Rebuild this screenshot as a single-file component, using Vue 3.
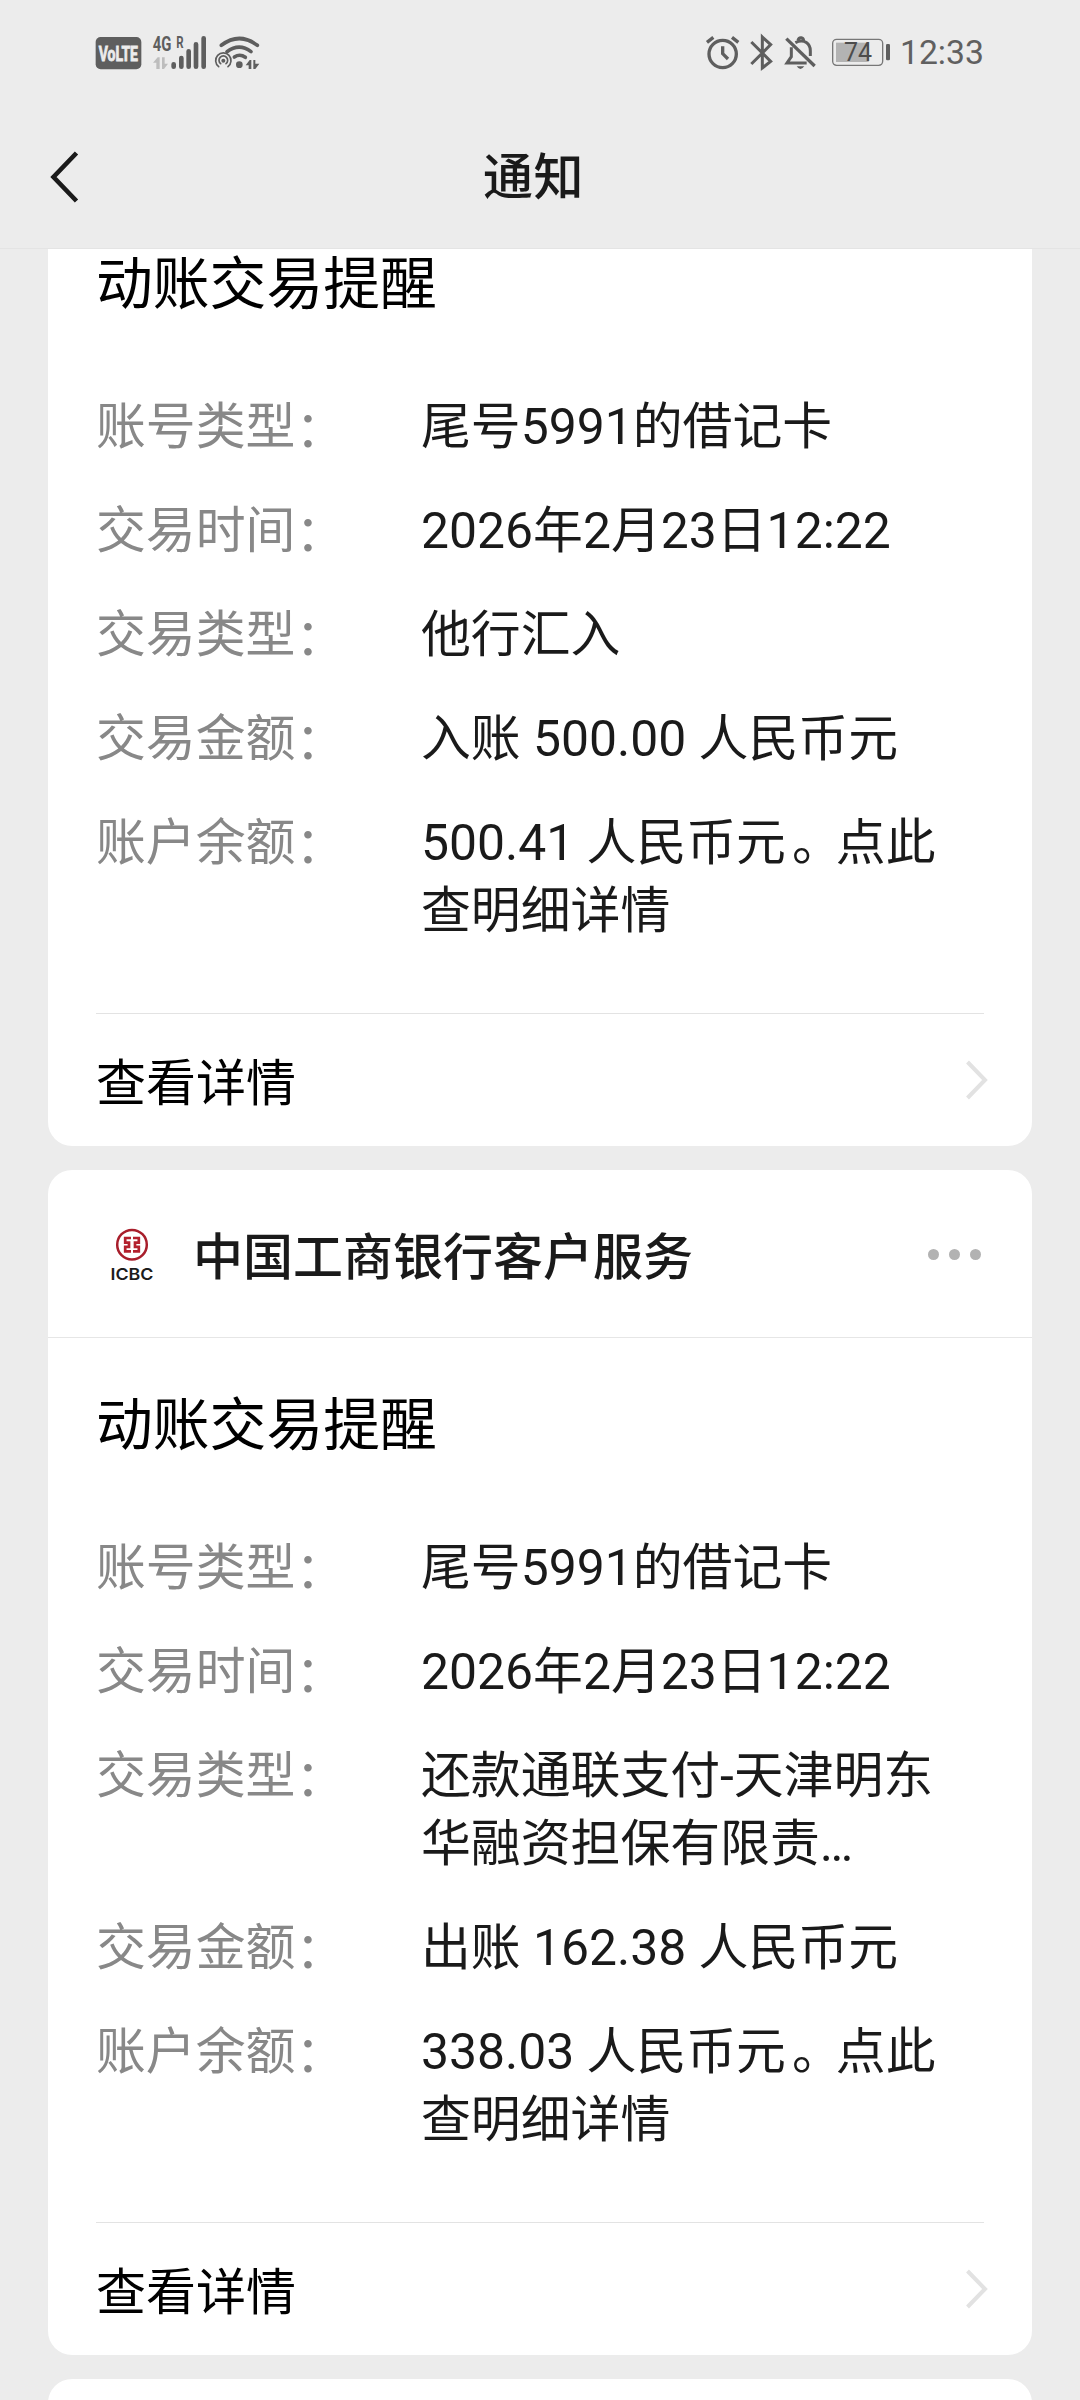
<script setup>
const cards = [
  {
    clipped: true,
    title: '动账交易提醒',
    rows: [
      { label: '账号类型', lines: ['尾号5991的借记卡'] },
      { label: '交易时间', lines: ['2026年2月23日12:22'] },
      { label: '交易类型', lines: ['他行汇入'] },
      { label: '交易金额', lines: ['入账 500.00 人民币元'] },
      { label: '账户余额', lines: ['500.41 人民币元。点此', '查明细详情'] },
    ],
  },
  {
    sender: '中国工商银行客户服务',
    title: '动账交易提醒',
    rows: [
      { label: '账号类型', lines: ['尾号5991的借记卡'] },
      { label: '交易时间', lines: ['2026年2月23日12:22'] },
      { label: '交易类型', lines: ['还款通联支付-天津明东', '华融资担保有限责…'] },
      { label: '交易金额', lines: ['出账 162.38 人民币元'] },
      { label: '账户余额', lines: ['338.03 人民币元。点此', '查明细详情'] },
    ],
  },
]

// Splits a line so that the full stop can be nudged inside its cell
const parts = (line) => line.split(/(。)/)
</script>

<template>
  <div class="screen">
    <div class="status">
      <svg class="status-left" viewBox="0 0 600 210" fill="none">
        <rect x="47" y="51" width="137" height="97" rx="15" fill="#5e5e5e" />
        <text x="115" y="122" text-anchor="middle" textLength="118" lengthAdjust="spacingAndGlyphs" font-size="60" font-weight="700" fill="#ececec" stroke="#ececec" stroke-width="2.500">VoLTE</text>
        <text x="218" y="93" textLength="56" lengthAdjust="spacingAndGlyphs" font-size="60" font-weight="700" fill="#5e5e5e">4G</text>
        <text x="289" y="84" textLength="22" lengthAdjust="spacingAndGlyphs" font-size="47" font-weight="700" fill="#5e5e5e">R</text>
        <path d="M219 128 233 112H239V147H229V128ZM246 112H254V131H264L252 147H246Z" fill="#bdbdbd" />
        <g stroke="#5e5e5e" stroke-width="14" stroke-linecap="round">
          <path d="M281 133V140M304 114V140M326 94V140M348 73V140M371 55V140" />
        </g>
        <g stroke="#5e5e5e" stroke-linecap="round">
          <path d="M424 76Q478 35 532 76" stroke-width="11" />
          <path d="M441 95Q478 68 513 95" stroke-width="11" />
          <path d="M463 111Q480 100 496 112" stroke-width="11" />
          <path d="M416 140A23 23 0 1 1 444 140" stroke-width="5" />
          <path d="M422 131A13 13 0 1 1 438 131" stroke-width="5" />
        </g>
        <circle cx="430" cy="122" r="6" fill="#5e5e5e" />
        <circle cx="478" cy="134" r="10" fill="#5e5e5e" />
        <path d="M497 136 509 120H514V147H506V136ZM520 120H526V131H538L526 147H520Z" fill="#5e5e5e" />
      </svg>
      <svg class="status-right" viewBox="0 0 615 210" fill="none" stroke="#5e5e5e">
        <circle cx="98" cy="102" r="41" stroke-width="10" />
        <path d="M98 79V101L114 117" stroke-width="10" />
        <path d="M51 67 70 52M126 52 145 67" stroke-width="10" />
        <path d="M184 66 242 124 217 144V51L242 74 184 132" stroke-width="9" />
        <path d="M289 56 374 138" stroke-width="10" />
        <path d="M304 82V110L291 129H350M316 68C344 54 361 73 361 92V108M324 61Q326 52 334 53Q340 54 341 62" stroke-width="9" />
        <path d="M320 139H343Q331 155 320 139Z" fill="#5e5e5e" stroke="none" />
        <rect x="428" y="58" width="150" height="78" rx="12" stroke="#777" stroke-width="4" />
        <rect x="438" y="68" width="98" height="58" fill="#b3b3b3" stroke="none" />
        <rect x="588" y="72" width="12" height="49" rx="4" fill="#5e5e5e" stroke="none" />
        <text x="504" y="122" text-anchor="middle" font-size="75" fill="#4c4c4c" stroke="none">74</text>
      </svg>
      <span class="clock">12:33</span>
    </div>

    <header class="nav">
      <svg class="back" viewBox="0 0 32 56" fill="none" stroke="#1a1a1a" stroke-width="4.600">
        <path d="M28.500 3 5.500 27 28.500 51" />
      </svg>
      <h1>通知</h1>
    </header>

    <main class="feed">
      <article v-for="(card, i) in cards" :key="i" class="card" :class="{ clipped: card.clipped }">
        <div v-if="card.sender" class="card-head">
          <svg class="logo" viewBox="0 0 48 56" fill="none">
            <circle cx="24" cy="18.700" r="14.800" stroke="#a81e2b" stroke-width="2.500" />
            <path d="M23 12H17.200V16.600H21V20.800H17.200V25.400H23M25 12H30.800V16.600H27V20.800H30.800V25.400H25" stroke="#b3202d" stroke-width="2.700" />
            <text x="24" y="53.500" text-anchor="middle" textLength="43" lengthAdjust="spacingAndGlyphs" font-size="16" font-weight="600" fill="#1c1c1c">ICBC</text>
          </svg>
          <span class="sender">{{ card.sender }}</span>
          <span class="more"><i></i><i></i><i></i></span>
        </div>
        <div class="card-body">
          <h2>{{ card.title }}</h2>
          <dl>
            <div v-for="row in card.rows" :key="row.label" class="row">
              <dt>{{ row.label }}<span class="colon">：</span></dt>
              <dd>
                <div v-for="line in row.lines" :key="line" class="line"><span v-for="(part, p) in parts(line)" :key="p" :class="{ stop: part === '。' }">{{ part }}</span></div>
              </dd>
            </div>
          </dl>
        </div>
        <div class="card-foot">
          <span>查看详情</span>
          <svg class="chevron" viewBox="0 0 24 42" fill="none" stroke="#e2e2e2" stroke-width="4">
            <path d="M2.500 3 20 21 2.500 39" />
          </svg>
        </div>
      </article>
      <article class="card next"></article>
    </main>
  </div>
</template>

<style>
body {
  background: #ececec;
}
</style>

<style scoped>
.screen {
  width: 1080px;
  height: 2400px;
  display: flex;
  flex-direction: column;
  overflow: hidden;
  background: #ececec;
  color: #1a1a1a;
  font-family: Roboto, "Noto Sans CJK SC", sans-serif;
}
.status {
  height: 108px;
  display: flex;
  align-items: flex-start;
  padding: 20px 0 0 80px;
  box-sizing: border-box;
}
.status-left {
  width: 200px;
  height: 70px;
}
.status-left text {
  font-family: Roboto, sans-serif;
}
.status-right {
  width: 205px;
  height: 70px;
  margin-left: 410px;
}
.clock {
  margin-left: 5px;
  font-size: 33.700px;
  line-height: 66px;
  color: #606060;
}
.nav {
  height: 141px;
  box-sizing: border-box;
  border-bottom: 1px solid #e4e4e4;
  display: flex;
  align-items: center;
  padding-left: 48px;
}
.back {
  width: 32px;
  height: 56px;
}
.nav h1 {
  margin: 0 0 0 403px;
  font-size: 50px;
  line-height: 68px;
  font-weight: 500;
  letter-spacing: 0.5px;
}
.feed {
  flex: 1;
  min-height: 0;
  overflow: hidden;
  display: flex;
  flex-direction: column;
  gap: 24px;
  padding: 0 48px;
}
.card {
  flex: none;
  background: #fff;
  border-radius: 24px;
}
.card.clipped {
  margin-top: -52px;
}
.card.next {
  height: 80px;
}
.card-head {
  height: 168px;
  box-sizing: border-box;
  border-bottom: 1px solid #e6e6e6;
  display: flex;
  align-items: center;
  padding: 0 51px 0 60px;
}
.logo {
  width: 48px;
  height: 56px;
}
.logo text {
  font-family: Inter, sans-serif;
}
.sender {
  margin-left: 37px;
  padding-top: 8px;
  font-size: 50px;
  line-height: 68px;
  font-weight: 500;
}
.more {
  margin-left: auto;
  padding-top: 1px;
  display: flex;
  gap: 10px;
}
.more i {
  width: 11px;
  height: 11px;
  border-radius: 50%;
  background: #b2b2b2;
}
.card-body {
  padding: 48px 48px 68px;
}
h2 {
  margin: 0;
  font-size: 56.800px;
  line-height: 80px;
  font-weight: 400;
  color: #000;
}
dl {
  margin: 68px 0 0;
  display: flex;
  flex-direction: column;
  gap: 36px;
}
.row {
  display: flex;
  font-size: 49.850px;
  line-height: 68px;
}
dt {
  width: 325px;
  flex: none;
  color: #888;
}
.colon {
  position: relative;
  top: 3px;
}
dd {
  margin: 0;
}
.line {
  white-space: pre;
}
.stop {
  margin-left: 6px;
  letter-spacing: -6px;
}
.card-foot {
  height: 133px;
  box-sizing: border-box;
  margin: 0 48px;
  border-top: 1px solid #e3e3e3;
  display: flex;
  align-items: center;
  justify-content: space-between;
  font-size: 50px;
  line-height: 68px;
  color: #000;
}
.card-foot span {
  padding-top: 8px;
}
.chevron {
  width: 24px;
  height: 42px;
  margin-right: -5px;
}
</style>
